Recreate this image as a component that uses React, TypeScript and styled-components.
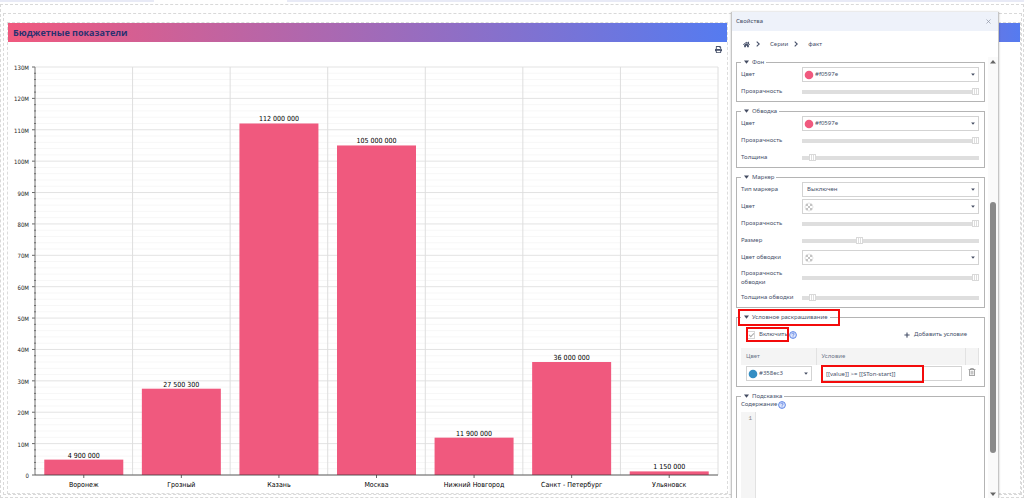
import React, { useId } from "react";
import styled, { createGlobalStyle } from "styled-components";
import { FaHome, FaPrint, FaPlus, FaRegTrashAlt } from "react-icons/fa";

const ui = `"Noto Sans", "Open Sans", sans-serif`;
const chartFont = `"DejaVu Sans Condensed", "DejaVu Sans", sans-serif`;
const ink = "#465069";

const Global = createGlobalStyle`
  * { box-sizing: border-box; }
  body { margin: 0; background: #fff; font-family: ${ui}; font-size: 6px; line-height: 9px; color: ${ink}; }
  button, input, select, textarea { font: inherit; color: inherit; margin: 0; }
`;

const Page = styled.div`
  position: relative;
  min-height: 100vh;
  overflow: hidden;
`;

const TabStrip = styled.div`
  display: grid;
  grid-template-columns: 15% 13% 1fr;
  height: 2px;
  margin-bottom: 2px;
  background: #e8eaf6;
`;

const ActiveTab = styled.div`
  grid-column: 2;
  background: #fff;
`;

const Canvas = styled.main`
  border: 1px dashed #d9d9d9;
  padding: 8px 1px 2px 2px;
`;

const Row = styled.div`
  display: grid;
  grid-template-columns: minmax(0, 721fr) minmax(0, 289fr);
  gap: 4px;
  border: 1px dashed #d9d9d9;
  padding: 8px 0 0 3px;
`;

const Widget = styled.section`
  border: 1px dashed #dcdcdc;
`;

const WidgetTitle = styled.h2`
  margin: 0;
  height: 19px;
  padding: 0 5px;
  background: linear-gradient(90deg, #f0597e, #557bf0);
  color: #2a3170;
  font-family: "Open Sans", sans-serif;
  font-size: 9px;
  line-height: 20px;
  font-weight: 700;
`;

const WidgetTools = styled.div`
  display: flex;
  justify-content: flex-end;
  align-items: center;
  height: 14px;
  padding-right: 5px;
`;

const IconButton = styled.button`
  display: inline-flex;
  align-items: center;
  gap: 4px;
  padding: 0;
  border: 0;
  background: none;
  color: ${(p) => p.color || ink};
`;

const ChartSvg = styled.svg`
  display: block;
  width: 100%;
  height: auto;
  font-family: ${chartFont};
`;

const Panel = styled.aside`
  position: absolute;
  top: 12px;
  right: 25px;
  bottom: 0;
  width: 268px;
  display: flex;
  flex-direction: column;
  background: #fff;
  border: solid #c6c6c6;
  border-width: 0 1px;
  box-shadow: 0 0 2px rgba(0, 0, 0, 0.25);
`;

const PanelHeader = styled.header`
  display: flex;
  justify-content: space-between;
  align-items: center;
  flex: none;
  height: 19px;
  padding: 0 7px 0 4px;
  background: #eef2fa;
`;

const Crumbs = styled.nav`
  display: flex;
  align-items: center;
  flex: none;
  gap: 6px;
  height: 26px;
  padding: 0 11px;
`;

const Crumb = styled.a<{ $indent?: boolean }>`
  display: inline-flex;
  margin-left: ${(p) => (p.$indent ? 4 : 0)}px;
  color: inherit;
  text-decoration: none;
`;

const PanelBody = styled.div`
  display: flex;
  flex: 1;
  min-height: 0;
  justify-content: space-between;
`;

const Groups = styled.form`
  display: flex;
  flex-direction: column;
  gap: 5px;
  width: 249px;
  margin-left: 4px;
  padding-top: 1px;
  overflow: hidden;
`;

const ScrollTrack = styled.div`
  display: flex;
  flex-direction: column;
  align-items: center;
  width: 10px;
  padding: 2px 0 1px;
  background: #fafafa;
`;

const ScrollThumb = styled.div`
  width: 6px;
  height: 251px;
  margin: auto 0 39px;
  border-radius: 3px;
  background: #8a8a8a;
`;

const Group = styled.fieldset<{ $pad?: number }>`
  flex: none;
  min-width: 0;
  margin: 0;
  padding: 0 5px ${(p) => p.$pad ?? 1}px 4px;
  border: 1px solid #b4b4b4;
`;

const Legend = styled.legend`
  display: flex;
  align-items: center;
  gap: 3px;
  height: 8px;
  padding: 0 2px 0 3px;
  line-height: 8px;
`;

const Field = styled.div<{ $tall?: boolean }>`
  display: grid;
  grid-template-columns: 61px 1fr;
  align-items: center;
  height: ${(p) => (p.$tall ? 23 : 17)}px;
`;

const FieldLabel = styled.label<{ $narrow?: boolean }>`
  max-width: ${(p) => (p.$narrow ? "48px" : "none")};
`;

const SelectBox = styled.div`
  position: relative;
  display: flex;
  align-items: center;
  height: 15px;
  border: 1px solid #d3d3d3;
  background: #fff;

  > svg { position: absolute; pointer-events: none; }
`;

const NativeSelect = styled.select<{ $swatch?: boolean }>`
  appearance: none;
  width: 100%;
  height: 13px;
  padding: 0 10px 0 ${(p) => (p.$swatch ? 12 : 4)}px;
  border: 0;
  background: none;
  outline: none;
`;

const Range = styled.input`
  appearance: none;
  width: 100%;
  height: 7px;
  background: linear-gradient(#dedede, #dedede) center / 100% 4px no-repeat;

  &::-webkit-slider-thumb {
    appearance: none;
    width: 7px;
    height: 7px;
    border: 1px solid #d9d9d9;
    background: linear-gradient(90deg, #fff 1px, #ddd 1px 2px, #fff 2px 3px, #ddd 3px 4px, #fff 4px);
  }
`;

const EnableRow = styled.div`
  display: flex;
  align-items: center;
  justify-content: space-between;
  height: 27px;
  padding: 0 12px 0 6px;
`;

const Inline = styled.span`
  position: relative;
  display: inline-flex;
  align-items: center;
`;

const CheckLabel = styled.label`
  display: inline-flex;
  align-items: center;
  gap: 4px;
  margin-right: 1px;
`;

const Check = styled.input`
  appearance: none;
  width: 8px;
  height: 8px;
  border: 1px solid #d6d6d6;
  display: grid;
  place-items: center;

  &:checked::after {
    content: "";
    width: 4px;
    height: 2px;
    margin-bottom: 1px;
    border: solid #aaa;
    border-width: 0 0 1px 1px;
    transform: rotate(-45deg);
  }
`;

const Mark = styled.span<{ $inset: string }>`
  position: absolute;
  inset: ${(p) => p.$inset};
  border: 2px solid #f30b0b;
  pointer-events: none;
`;

const GroupWrap = styled.div`
  position: relative;
  flex: none;
`;

const Rules = styled.table`
  width: 100%;
  border-collapse: collapse;
  table-layout: fixed;

  th {
    height: 17px;
    padding: 0 5px;
    background: #f4f4f4;
    border-right: 1px solid #e2e2e2;
    font-weight: 400;
    text-align: left;
    color: #6c7488;
  }
  td { height: 17px; padding: 0 4px 0 5px; }
  td:last-child { padding: 0 2px; text-align: center; }
`;

const RuleInput = styled.input`
  display: block;
  width: 100%;
  height: 15px;
  padding: 0 4px;
  border: 1px solid #d3d3d3;
  background: #fff;
`;

const ContentLabel = styled.label`
  display: inline-flex;
  align-items: center;
  gap: 1px;
  height: 9px;
`;

const Editor = styled.div`
  display: grid;
  grid-template-columns: 15px 1fr;
  height: 120px;
  margin-top: 3px;
`;

const Gutter = styled.div`
  padding: 2px 3px;
  background: #f5f5f5;
  border-right: 1px solid #e2e2e2;
  font-family: "Liberation Mono", monospace;
  text-align: right;
  color: #888;
`;

const Code = styled.textarea`
  border: 0;
  padding: 2px;
  resize: none;
  outline: none;
`;

const CaretDown = ({ size = 5, fill = "#444c62", right }: { size?: number; fill?: string; right?: number }) => (
  <svg width={size} height={size - 1} viewBox="0 0 5 4" style={right === undefined ? undefined : { right }}>
    <path d="M0 .5h5L2.500 3.700z" fill={fill} />
  </svg>
);

const Chevron = () => (
  <svg width="4" height="6" viewBox="0 0 4 6">
    <path d="M.7.600 3.200 3 .7 5.400" fill="none" stroke={ink} strokeWidth="1.100" />
  </svg>
);

const Help = () => (
  <svg width="8" height="8" viewBox="0 0 16 16">
    <circle cx="8" cy="8" r="6.800" fill="#dfe7fc" stroke="#5f86e6" strokeWidth="2" />
    <path d="M5.700 6.400c0-3 4.600-3 4.600-.3 0 1.700-2.300 1.700-2.300 3.400M8 11v1.700" fill="none" stroke="#4a70dc" strokeWidth="1.600" />
  </svg>
);

const Swatch = ({ color }: { color?: string }) => (
  <svg width="11" height="10" viewBox="0 0 11 10">
    {color ? (
      <circle cx="6" cy="5" r="4.300" fill={color} />
    ) : (
      <>
        <circle cx="6" cy="5" r="4" fill="#fff" stroke="#d0d0d0" strokeWidth=".6" />
        <path d="M3 2h2v2H3zM7 2h2v2H7zM5 4h2v2H5zM3 6h2v2H3zM7 6h2v2H7z" fill="#c4c4c4" />
      </>
    )}
  </svg>
);

function Choice({ id, label, value, color, swatch }: { id?: string; label?: string; value: string; color?: string; swatch?: boolean }) {
  return (
    <SelectBox>
      {swatch && <Swatch color={color} />}
      <NativeSelect id={id} aria-label={label} $swatch={swatch} defaultValue={value}>
        <option value={value}>{value}</option>
      </NativeSelect>
      <CaretDown size={4} right={3} />
    </SelectBox>
  );
}

function SelectField(p: { label: string; value: string; color?: string; swatch?: boolean }) {
  const id = useId();
  return (
    <Field>
      <FieldLabel htmlFor={id}>{p.label}</FieldLabel>
      <Choice id={id} value={p.value} color={p.color} swatch={p.swatch} />
    </Field>
  );
}

function SliderField({ label, value, tall }: { label: string; value: number; tall?: boolean }) {
  const id = useId();
  return (
    <Field $tall={tall}>
      <FieldLabel htmlFor={id} $narrow={tall}>{label}</FieldLabel>
      <Range id={id} type="range" min={0} max={100} defaultValue={value} />
    </Field>
  );
}

const Title = ({ children }: { children: React.ReactNode }) => (
  <Legend>
    <CaretDown />
    {children}
  </Legend>
);

const data = [
  { city: "Воронеж", value: 4900000, text: "4 900 000" },
  { city: "Грозный", value: 27500300, text: "27 500 300" },
  { city: "Казань", value: 112000000, text: "112 000 000" },
  { city: "Москва", value: 105000000, text: "105 000 000" },
  { city: "Нижний Новгород", value: 11900000, text: "11 900 000" },
  { city: "Санкт - Петербург", value: 36000000, text: "36 000 000" },
  { city: "Ульяновск", value: 1150000, text: "1 150 000" },
];

const plot = { left: 27, right: 710, top: 11, bottom: 419 };
const step = (plot.right - plot.left) / data.length;
const yOf = (millions: number) => plot.bottom - (millions * (plot.bottom - plot.top)) / 130;

function BarChart() {
  const ticks = Array.from({ length: 66 }, (_, i) => i * 2);
  return (
    <ChartSvg viewBox="0 0 719 437" role="img" aria-label="Бюджетные показатели">
      {ticks.map((t) => (
        <line key={t} x1={plot.left} x2={plot.right} y1={yOf(t)} y2={yOf(t)} stroke={t % 10 ? "#f7f7f7" : "#e3e3e3"} />
      ))}
      {data.map((d, i) => (
        <line key={d.city} x1={plot.left + step * (i + 1)} x2={plot.left + step * (i + 1)} y1={plot.top} y2={plot.bottom} stroke="#dedede" />
      ))}
      {data.map((d, i) => {
        const mid = plot.left + step * (i + 0.5);
        const y = yOf(d.value / 1e6);
        return (
          <g key={d.city} textAnchor="middle">
            <rect x={mid - 39.5} y={y} width="79" height={plot.bottom - y} fill="#f0597e" />
            <text x={mid} y={y - 2} fontSize="7" fill="#000">{d.text}</text>
            <line x1={mid} x2={mid} y1={plot.bottom} y2={plot.bottom + 3} stroke="#666" />
            <text x={mid} y="431" fontSize="7" fill="#000">{d.city}</text>
          </g>
        );
      })}
      {ticks.map((t) => (
        <line key={t} x1={plot.left - (t % 10 ? 1 : 3)} x2={plot.left + (t % 10 ? 1 : 0)} y1={yOf(t)} y2={yOf(t)} stroke="#666" />
      ))}
      {ticks.filter((t) => t % 10 === 0).map((t) => (
        <text key={t} x="21" y={yOf(t) + 3} textAnchor="end" fontSize="6" fill="#222">{t ? `${t}M` : "0"}</text>
      ))}
      <path d={`M${plot.left} ${plot.top}V${plot.bottom}`} stroke="#777" fill="none" />
      <path d={`M${plot.left} ${plot.bottom}H${plot.right}`} stroke="#333" strokeOpacity=".75" fill="none" />
    </ChartSvg>
  );
}

export default function App() {
  return (
    <Page>
      <Global />
      <TabStrip>
        <ActiveTab />
      </TabStrip>
      <Canvas>
        <Row>
          <Widget>
            <WidgetTitle>Бюджетные показатели</WidgetTitle>
            <WidgetTools>
              <IconButton type="button" aria-label="Печать">
                <FaPrint size={7} />
              </IconButton>
            </WidgetTools>
            <BarChart />
          </Widget>
          <Widget>
            <WidgetTitle as="div" />
          </Widget>
        </Row>
      </Canvas>

      <Panel>
        <PanelHeader>
          <span>Свойства</span>
          <IconButton type="button" aria-label="Закрыть">
            <svg width="5" height="5" viewBox="0 0 5 5">
              <path d="M.5.5l4 4M4.500.5l-4 4" stroke="#8e95a5" strokeWidth=".7" />
            </svg>
          </IconButton>
        </PanelHeader>
        <Crumbs>
          <Crumb href="#" aria-label="Главная"><FaHome size={7} /></Crumb>
          <Chevron />
          <Crumb href="#" $indent>Серии</Crumb>
          <Chevron />
          <Crumb href="#" $indent>факт</Crumb>
        </Crumbs>
        <PanelBody>
          <Groups>
            <Group>
              <Title>Фон</Title>
              <SelectField label="Цвет" value="#f0597e" color="#f0597e" swatch />
              <SliderField label="Прозрачность" value={100} />
            </Group>
            <Group>
              <Title>Обводка</Title>
              <SelectField label="Цвет" value="#f0597e" color="#f0597e" swatch />
              <SliderField label="Прозрачность" value={100} />
              <SliderField label="Толщина" value={4} />
            </Group>
            <Group>
              <Title>Маркер</Title>
              <SelectField label="Тип маркера" value="Выключен" />
              <SelectField label="Цвет" value="" swatch />
              <SliderField label="Прозрачность" value={100} />
              <SliderField label="Размер" value={32} />
              <SelectField label="Цвет обводки" value="" swatch />
              <SliderField label="Прозрачность обводки" value={100} tall />
              <SliderField label="Толщина обводки" value={4} />
            </Group>
            <GroupWrap>
              <Group $pad={4}>
                <Title>Условное раскрашивание</Title>
                <EnableRow>
                  <Inline>
                    <CheckLabel>
                      <Check type="checkbox" defaultChecked />
                      Включить
                    </CheckLabel>
                    <Help />
                    <Mark $inset="-3px 8px -3px -1px" />
                  </Inline>
                  <IconButton type="button">
                    <FaPlus size={6} />
                    Добавить условие
                  </IconButton>
                </EnableRow>
                <Rules>
                  <colgroup>
                    <col style={{ width: 75 }} />
                    <col />
                    <col style={{ width: 13 }} />
                  </colgroup>
                  <thead>
                    <tr>
                      <th>Цвет</th>
                      <th>Условие</th>
                      <th aria-label="Действия" />
                    </tr>
                  </thead>
                  <tbody>
                    <tr>
                      <td><Choice label="Цвет" value="#358ec3" color="#358ec3" swatch /></td>
                      <td><RuleInput aria-label="Условие" defaultValue="[[value]] >= [[STon-start]]" /></td>
                      <td>
                        <IconButton type="button" aria-label="Удалить" color="#8a8a8a">
                          <FaRegTrashAlt size={8} />
                        </IconButton>
                      </td>
                    </tr>
                  </tbody>
                </Rules>
              </Group>
              <Mark $inset="-4px 145px 61px 2px" />
              <Mark $inset="52px 61px 4px 85px" />
            </GroupWrap>
            <Group>
              <Title>Подсказка</Title>
              <ContentLabel htmlFor="tooltip-content">
                Содержание
                <Help />
              </ContentLabel>
              <Editor>
                <Gutter>1</Gutter>
                <Code id="tooltip-content" />
              </Editor>
            </Group>
          </Groups>
          <ScrollTrack>
            <svg width="6" height="5" viewBox="0 0 6 5"><path d="M0 4.500h6L3 1z" fill="#666" /></svg>
            <ScrollThumb />
            <svg width="6" height="5" viewBox="0 0 6 5"><path d="M0 .5h6L3 4z" fill="#666" /></svg>
          </ScrollTrack>
        </PanelBody>
      </Panel>
    </Page>
  );
}
